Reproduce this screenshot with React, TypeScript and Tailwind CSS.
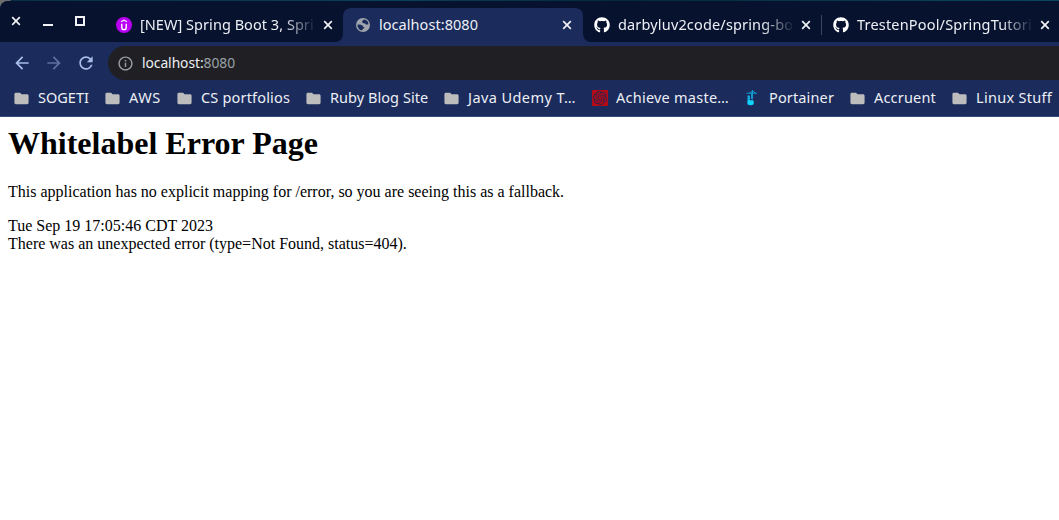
import type { ReactNode } from "react";
import { FaGithub } from "react-icons/fa";
import { MdArrowBack, MdArrowForward, MdFolder, MdInfoOutline, MdRefresh } from "react-icons/md";
import { SiOpenai } from "react-icons/si";

function CloseIcon() {
  return (
    <svg width="10" height="10" viewBox="0 0 10 10" className="shrink-0" aria-hidden>
      <path d="M1.2 1.2 8.8 8.8M8.8 1.2 1.2 8.8" stroke="#f1f2f5" strokeWidth="1.7" />
    </svg>
  );
}

function GlobeIcon() {
  return (
    <svg width="16" height="16" viewBox="0 0 16 16" aria-hidden>
      <circle cx="8" cy="8" r="7" fill="#a0a5ad" />
      <path
        d="M9.6 2.6C8.2 2.9 7.2 3.7 7.2 4.8s.9 1.4 2 1.5c1 .1 1 .9 1.8 1.2.9.3 1.6-.3 2.4.1.2-2.3-1.3-4.4-3.8-5z"
        fill="#1a2b5c"
      />
      <path
        d="M2.5 7.7c1.6-.3 3.4-.2 4.5.5 1 .6.7 1.5 1.7 1.7.8.2.9.9.3 1.4-.8.5-1.6.5-1.8 2.2C4.500 13.200 2.400 10.800 2.500 7.700z"
        fill="#1a2b5c"
      />
    </svg>
  );
}

function UdemyIcon() {
  return (
    <svg width="16" height="16" viewBox="0 0 16 16" aria-hidden>
      <circle cx="8" cy="8" r="8" fill="#b900f2" />
      <path d="M5.2 4.7 8 3.1l2.8 1.6" fill="none" stroke="#fff" strokeWidth="1.2" />
      <path d="M5.8 6.8v3.6a2.2 2.2 0 0 0 4.4 0V6.8" fill="none" stroke="#fff" strokeWidth="1.4" />
    </svg>
  );
}

function PortainerIcon() {
  return (
    <svg width="16" height="16" viewBox="0 0 16 16" aria-hidden>
      <path d="M1.5 3.2H12M7.5.3v9M4.5 3.2 7.5.8l3 2.4M6.5 3v6" fill="none" stroke="#12b4ea" strokeWidth="0.8" />
      <path d="M2.500 5.500h2.500v5H2.500z" fill="#13a9dc" />
      <path d="M2.400 10.200h5.400l.9.8v3.2q-3 2-6.300 0z" fill="#10d3fe" />
    </svg>
  );
}

interface TabProps {
  icon: ReactNode;
  title: string;
  textClass: string;
  fade?: boolean;
}

function Tab({ icon, title, textClass, fade }: TabProps) {
  return (
    <div className="flex min-w-0 flex-1 items-center">
      <span className="flex size-4 shrink-0 items-center justify-center">{icon}</span>
      <span
        className={`ml-2 w-[175px] shrink-0 whitespace-nowrap ${textClass} ${
          fade ? "[mask-image:linear-gradient(to_right,black_82%,transparent_101%)]" : ""
        }`}
      >
        {title}
      </span>
      <span className="ml-2 shrink-0">
        <CloseIcon />
      </span>
    </div>
  );
}

const folder = <MdFolder size={17} className="-ml-px shrink-0 text-[#bdbdbd]" />;

const bookmarks: { label: string; icon: ReactNode; text: string }[] = [
  { label: "SOGETI", icon: folder, text: "w-[51px]" },
  { label: "AWS", icon: folder, text: "w-8 tracking-[0.5px]" },
  { label: "CS portfolios", icon: folder, text: "w-[89px] tracking-[0.18px]" },
  { label: "Ruby Blog Site", icon: folder, text: "w-[98px] tracking-[0.05px]" },
  { label: "Java Udemy T…", icon: folder, text: "w-[108px] tracking-[0.42px]" },
  {
    label: "Achieve maste…",
    icon: (
      <span className="flex size-4 shrink-0 items-center justify-center bg-[#b10b18]">
        <SiOpenai size={14} className="text-[#33204a]" />
      </span>
    ),
    text: "w-[113px] tracking-[0.24px]",
  },
  { label: "Portainer", icon: <PortainerIcon />, text: "w-[65px] tracking-[0.14px]" },
  { label: "Accruent", icon: folder, text: "w-[62px] tracking-[0.19px]" },
  { label: "Linux Stuff", icon: folder, text: "w-[76px] tracking-[0.3px]" },
];

export default function App() {
  return (
    <div className="flex h-[520px] w-[1059px] flex-col overflow-hidden bg-white font-['Noto_Sans',sans-serif] text-[14.5px] text-[#edeff5]">
      <div className="bg-[linear-gradient(to_right,#6d6d6d_0px,#6d6d6d_10px,#053146_11px,#074057_400px,#04293d_620px,#08475c_1059px)] pt-px">
        <header className="overflow-hidden rounded-tl-lg bg-[#1a2b5c]">
          <div className="flex h-[41px]">
            <div className="flex w-[343px] shrink-0 rounded-br-lg bg-[#07122e]">
              <div className="flex w-[116px] shrink-0 gap-[22px] pl-[11px] pt-[15px]">
                <CloseIcon />
                <span className="mt-2 h-0.5 w-2.5 shrink-0 bg-[#f1f2f5]" />
                <span className="size-2.5 shrink-0 border-2 border-[#f1f2f5]" />
              </div>
              <div className="flex flex-1 pt-[7px]">
                <Tab icon={<UdemyIcon />} title="[NEW] Spring Boot 3, Spri" textClass="tracking-[0.04px]" fade />
              </div>
            </div>
            <div className="flex w-60 shrink-0 bg-[#07122e] pt-[7px]">
              <div className="flex flex-1 rounded-t-lg bg-[#1a2b5c] pl-3">
                <Tab icon={<GlobeIcon />} title="localhost:8080" textClass="tracking-[0.05px]" />
              </div>
            </div>
            <div className="flex flex-1 rounded-bl-lg bg-[#07122e] pl-[11px] pt-[7px]">
              <div className="flex w-[227px] shrink-0">
                <Tab icon={<FaGithub size={16} className="text-white" />} title="darbyluv2code/spring-bo" textClass="tracking-[0.16px]" fade />
              </div>
              <span className="-mt-px mr-[11px] h-5 w-px shrink-0 self-center bg-[#3d465f]" />
              <Tab icon={<FaGithub size={16} className="text-white" />} title="TrestenPool/SpringTutori" textClass="tracking-[0.18px]" fade />
            </div>
          </div>
          <div className="flex h-[38px] items-center pl-3">
            <MdArrowBack size={20} className="mt-1 shrink-0 text-[#a9bfea]" />
            <MdArrowForward size={20} className="ml-3 mt-1 shrink-0 text-[#5f719f]" />
            <MdRefresh size={20} className="ml-3 mt-1 shrink-0 text-[#a9bfea]" />
            <div className="ml-3 mt-1 flex h-[34px] flex-1 items-center rounded-l-full bg-[#202024] pl-[9px]">
              <MdInfoOutline size={17} className="shrink-0 text-[#9aa0a6]" />
              <span className="ml-2 text-[13.8px] tracking-[-0.04px] text-[#9aa0a6]">
                <span className="text-[#edeff5]">localhost:</span>8080
              </span>
            </div>
          </div>
          <nav className="flex h-[37px] items-center gap-4 border-b border-[#35497c] pl-3.5">
            {bookmarks.map((b) => (
              <div key={b.label} className="flex shrink-0 items-center gap-2">
                <span className="flex size-4 items-center">{b.icon}</span>
                <span className={`whitespace-nowrap ${b.text}`}>{b.label}</span>
              </div>
            ))}
          </nav>
        </header>
      </div>
      <main className="px-2 pt-2 font-['Liberation_Serif',serif] text-base/[18px] text-black">
        <h1 className="text-[32px]/[37px] font-bold">Whitelabel Error Page</h1>
        <p className="mt-[21px]">This application has no explicit mapping for /error, so you are seeing this as a fallback.</p>
        <div className="mt-4">Tue Sep 19 17:05:46 CDT 2023</div>
        <div>There was an unexpected error (type=Not Found, status=404).</div>
      </main>
    </div>
  );
}
